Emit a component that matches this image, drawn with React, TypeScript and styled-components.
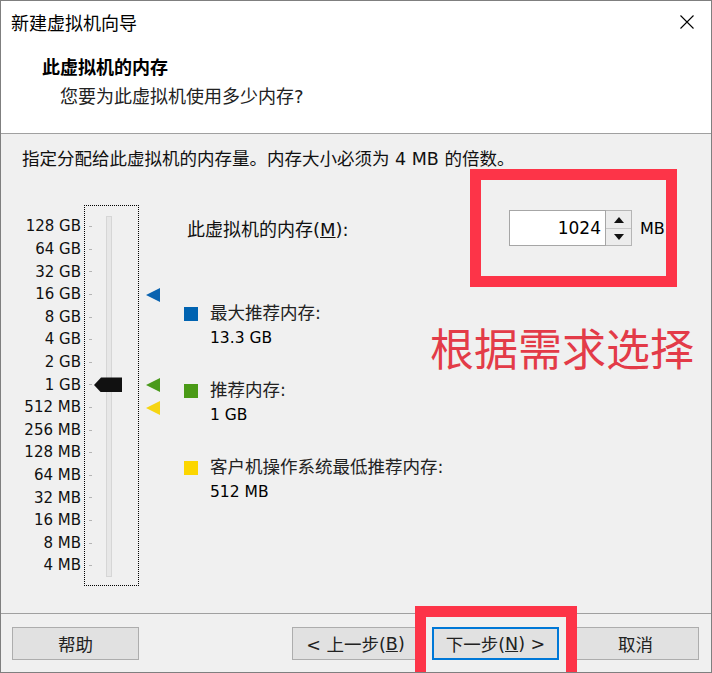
import React from 'react';
import styled, { createGlobalStyle } from 'styled-components';

const GlobalStyle = createGlobalStyle`
  html, body { margin: 0; padding: 0; background: #fff; }
  * { box-sizing: border-box; }
`;

const UI_FONT = `"DejaVu Sans", "Noto Sans CJK SC", sans-serif`;

// memory scale, top to bottom
const SCALE = ['128 GB', '64 GB', '32 GB', '16 GB', '8 GB', '4 GB', '2 GB', '1 GB', '512 MB', '256 MB', '128 MB', '64 MB', '32 MB', '16 MB', '8 MB', '4 MB'];
const ROW = 22.6;
const FIRST_ROW_CENTER = 21.7; // from the top of the slider box

const Window = styled.div`
  position: relative;
  width: 712px;
  height: 673px;
  border: 1px solid #7f7f7f;
  background: #fff;
  display: flex;
  flex-direction: column;
  overflow: hidden;
  font-family: ${UI_FONT};
  color: #000;
`;

const TitleBar = styled.div`
  height: 42px;
  flex-shrink: 0;
  display: flex;
  align-items: center;
  justify-content: space-between;
  padding: 0 17px 0 10px;
  font-size: 18px;
`;

const Header = styled.div`
  height: 91px;
  flex-shrink: 0;
  padding: 14px 0 0 41px;
  border-bottom: 1px solid #a0a0a0;
`;

const HeaderTitle = styled.div`
  font-size: 18px;
  line-height: 22px;
  font-weight: 700;
`;

const HeaderSub = styled.div`
  font-size: 18px;
  line-height: 22px;
  margin: 7px 0 0 18px;
  color: #222;
`;

const Body = styled.div`
  flex: 1;
  background: #f0f0f0;
  padding: 14px 0 0 21px;
`;

const Instruction = styled.div`
  font-size: 17.5px;
  line-height: 22px;
  color: #111;
`;

const Main = styled.div`
  display: flex;
  align-items: flex-start;
  margin-top: 35px;
`;

const ScaleLabels = styled.div`
  width: 59px;
  margin-right: 3px;
  padding-top: 10.4px;
  display: grid;
  grid-auto-rows: ${ROW}px;
  text-align: right;
  font-size: 15px;
  line-height: ${ROW}px;
  color: #111;
`;

const SliderBox = styled.div`
  position: relative;
  width: 55px;
  height: 381px;
  border: 1px dotted #000;
  display: flex;
`;

const Ticks = styled.div`
  width: 21px;
  padding-top: 9.4px;
  display: grid;
  grid-auto-rows: ${ROW}px;
  align-items: center;
`;

const Tick = styled.div`
  width: 3px;
  height: 1px;
  margin-left: 4px;
  background: #b4b4b4;
`;

const Track = styled.div`
  width: 6px;
  height: 361px;
  margin-top: 10px;
  background: #e7e7e7;
  border: 1px solid #d6d6d6;
`;

const Thumb = styled.div`
  position: absolute;
  left: 9px;
  width: 28px;
  height: 15px;
  background: #111;
  clip-path: polygon(0 50%, 7px 0, 100% 0, 100% 100%, 7px 100%);
`;

const MarkerRail = styled.div`
  position: relative;
  width: 45px;
  height: 381px;
`;

const Marker = styled.div<{ $color: string }>`
  position: absolute;
  left: 7px;
  width: 0;
  height: 0;
  border-top: 7px solid transparent;
  border-bottom: 7px solid transparent;
  border-right: 14px solid ${p => p.$color};
`;

const RightPanel = styled.div`
  flex: 1;
  padding-top: 5px;
`;

const MemoryRow = styled.div`
  display: flex;
  align-items: center;
  height: 36px;
`;

const MemoryLabel = styled.div`
  width: 325px;
  padding-left: 3px;
  font-size: 18px;
  color: #111;
`;

const NumberInput = styled.div`
  width: 97px;
  height: 36px;
  background: #fff;
  border: 1px solid #a6a6a6;
  display: flex;
  align-items: center;
  justify-content: flex-end;
  padding-right: 4px;
  font-size: 17px;
`;

const Spin = styled.div`
  width: 26px;
  height: 36px;
  display: grid;
  grid-template-rows: 1fr 1fr;
  border: 1px solid #b5b5b5;
  border-left: none;
`;

const SpinButton = styled.div<{ $down?: boolean }>`
  display: flex;
  align-items: center;
  justify-content: center;
  background: #ececec;
  border-top: ${p => (p.$down ? '1px solid #c8c8c8' : 'none')};
  &::after {
    content: '';
    border-left: 5px solid transparent;
    border-right: 5px solid transparent;
    ${p => (p.$down ? 'border-top: 6px solid #111;' : 'border-bottom: 6px solid #111;')}
  }
`;

const Unit = styled.div`
  margin-left: 8px;
  font-size: 16px;
`;

const Legend = styled.div`
  margin-top: 55px;
  display: grid;
  gap: 27px;
`;

const LegendItem = styled.div`
  display: grid;
  grid-template-columns: 26px 1fr;
`;

const Swatch = styled.div<{ $color: string }>`
  width: 14px;
  height: 14px;
  margin-top: 5.5px;
  background: ${p => p.$color};
`;

const LegendTitle = styled.div`
  font-size: 17.5px;
  line-height: 25px;
  color: #222;
`;

const LegendValue = styled.div`
  font-size: 15.5px;
  line-height: 25px;
  color: #000;
`;

const Footer = styled.div`
  height: 59px;
  flex-shrink: 0;
  border-top: 1px solid #a0a0a0;
  background: #f0f0f0;
  display: flex;
  align-items: flex-start;
  padding: 13px 12px 0 11px;
`;

const Spacer = styled.div`
  flex: 1;
`;

const Button = styled.div<{ $primary?: boolean }>`
  width: 127px;
  height: 33px;
  margin-left: ${p => (p.$primary ? '13px' : '0')};
  display: flex;
  align-items: center;
  justify-content: center;
  background: #e1e1e1;
  border: ${p => (p.$primary ? '2px solid #0078d7' : '1px solid #adadad')};
  font-size: 17.5px;
  color: #222;
  & + & {
    margin-left: 13px;
  }
`;

const RedFrame = styled.div<{ $x: number; $y: number; $w: number; $h: number }>`
  position: absolute;
  left: ${p => p.$x}px;
  top: ${p => p.$y}px;
  width: ${p => p.$w}px;
  height: ${p => p.$h}px;
  border: 11px solid #fd3448;
`;

const Callout = styled.div`
  position: absolute;
  left: 429px;
  top: 324px;
  font-family: "Noto Sans CJK SC", sans-serif;
  font-size: 44px;
  line-height: 44px;
  color: #e33b48;
`;

const CloseIcon = () => (
  <svg width="14" height="14" viewBox="0 0 14 14">
    <path d="M0.5 0.5 L13.5 13.5 M13.5 0.5 L0.5 13.5" stroke="#000" strokeWidth="1.1" fill="none" />
  </svg>
);

const markers = [
  { idx: 3, color: '#0a63b0' },
  { idx: 7, color: '#4a9a1c' },
  { idx: 8, color: '#f6d512' },
];

const legend = [
  { color: '#0063b1', title: '最大推荐内存:', value: '13.3 GB' },
  { color: '#4a9a16', title: '推荐内存:', value: '1 GB' },
  { color: '#fcd600', title: '客户机操作系统最低推荐内存:', value: '512 MB' },
];

export default function App() {
  const current = 7;

  return (
    <>
      <GlobalStyle />
      <Window>
        <TitleBar>
          <span>新建虚拟机向导</span>
          <CloseIcon />
        </TitleBar>

        <Header>
          <HeaderTitle>此虚拟机的内存</HeaderTitle>
          <HeaderSub>您要为此虚拟机使用多少内存?</HeaderSub>
        </Header>

        <Body>
          <Instruction>指定分配给此虚拟机的内存量。内存大小必须为 4 MB 的倍数。</Instruction>
          <Main>
            <ScaleLabels>
              {SCALE.map(s => <div key={s}>{s}</div>)}
            </ScaleLabels>
            <SliderBox>
              <Ticks>
                {SCALE.map(s => <Tick key={s} />)}
              </Ticks>
              <Track />
              <Thumb style={{ top: FIRST_ROW_CENTER - 1 + current * ROW - 7.5 }} />
            </SliderBox>
            <MarkerRail>
              {markers.map(m => (
                <Marker key={m.idx} $color={m.color} style={{ top: FIRST_ROW_CENTER + m.idx * ROW - 7 }} />
              ))}
            </MarkerRail>
            <RightPanel>
              <MemoryRow>
                <MemoryLabel>此虚拟机的内存(<u>M</u>):</MemoryLabel>
                <NumberInput>1024</NumberInput>
                <Spin>
                  <SpinButton />
                  <SpinButton $down />
                </Spin>
                <Unit>MB</Unit>
              </MemoryRow>
              <Legend>
                {legend.map(l => (
                  <LegendItem key={l.title}>
                    <Swatch $color={l.color} />
                    <div>
                      <LegendTitle>{l.title}</LegendTitle>
                      <LegendValue>{l.value}</LegendValue>
                    </div>
                  </LegendItem>
                ))}
              </Legend>
            </RightPanel>
          </Main>
        </Body>

        <Footer>
          <Button>帮助</Button>
          <Spacer />
          <Button>&lt; 上一步(<u>B</u>)</Button>
          <Button $primary>下一步(<u>N</u>) &gt;</Button>
          <Button>取消</Button>
        </Footer>

        <RedFrame $x={469} $y={168} $w={207} $h={118} />
        <RedFrame $x={414} $y={605} $w={162} $h={80} />
        <Callout>根据需求选择</Callout>
      </Window>
    </>
  );
}
